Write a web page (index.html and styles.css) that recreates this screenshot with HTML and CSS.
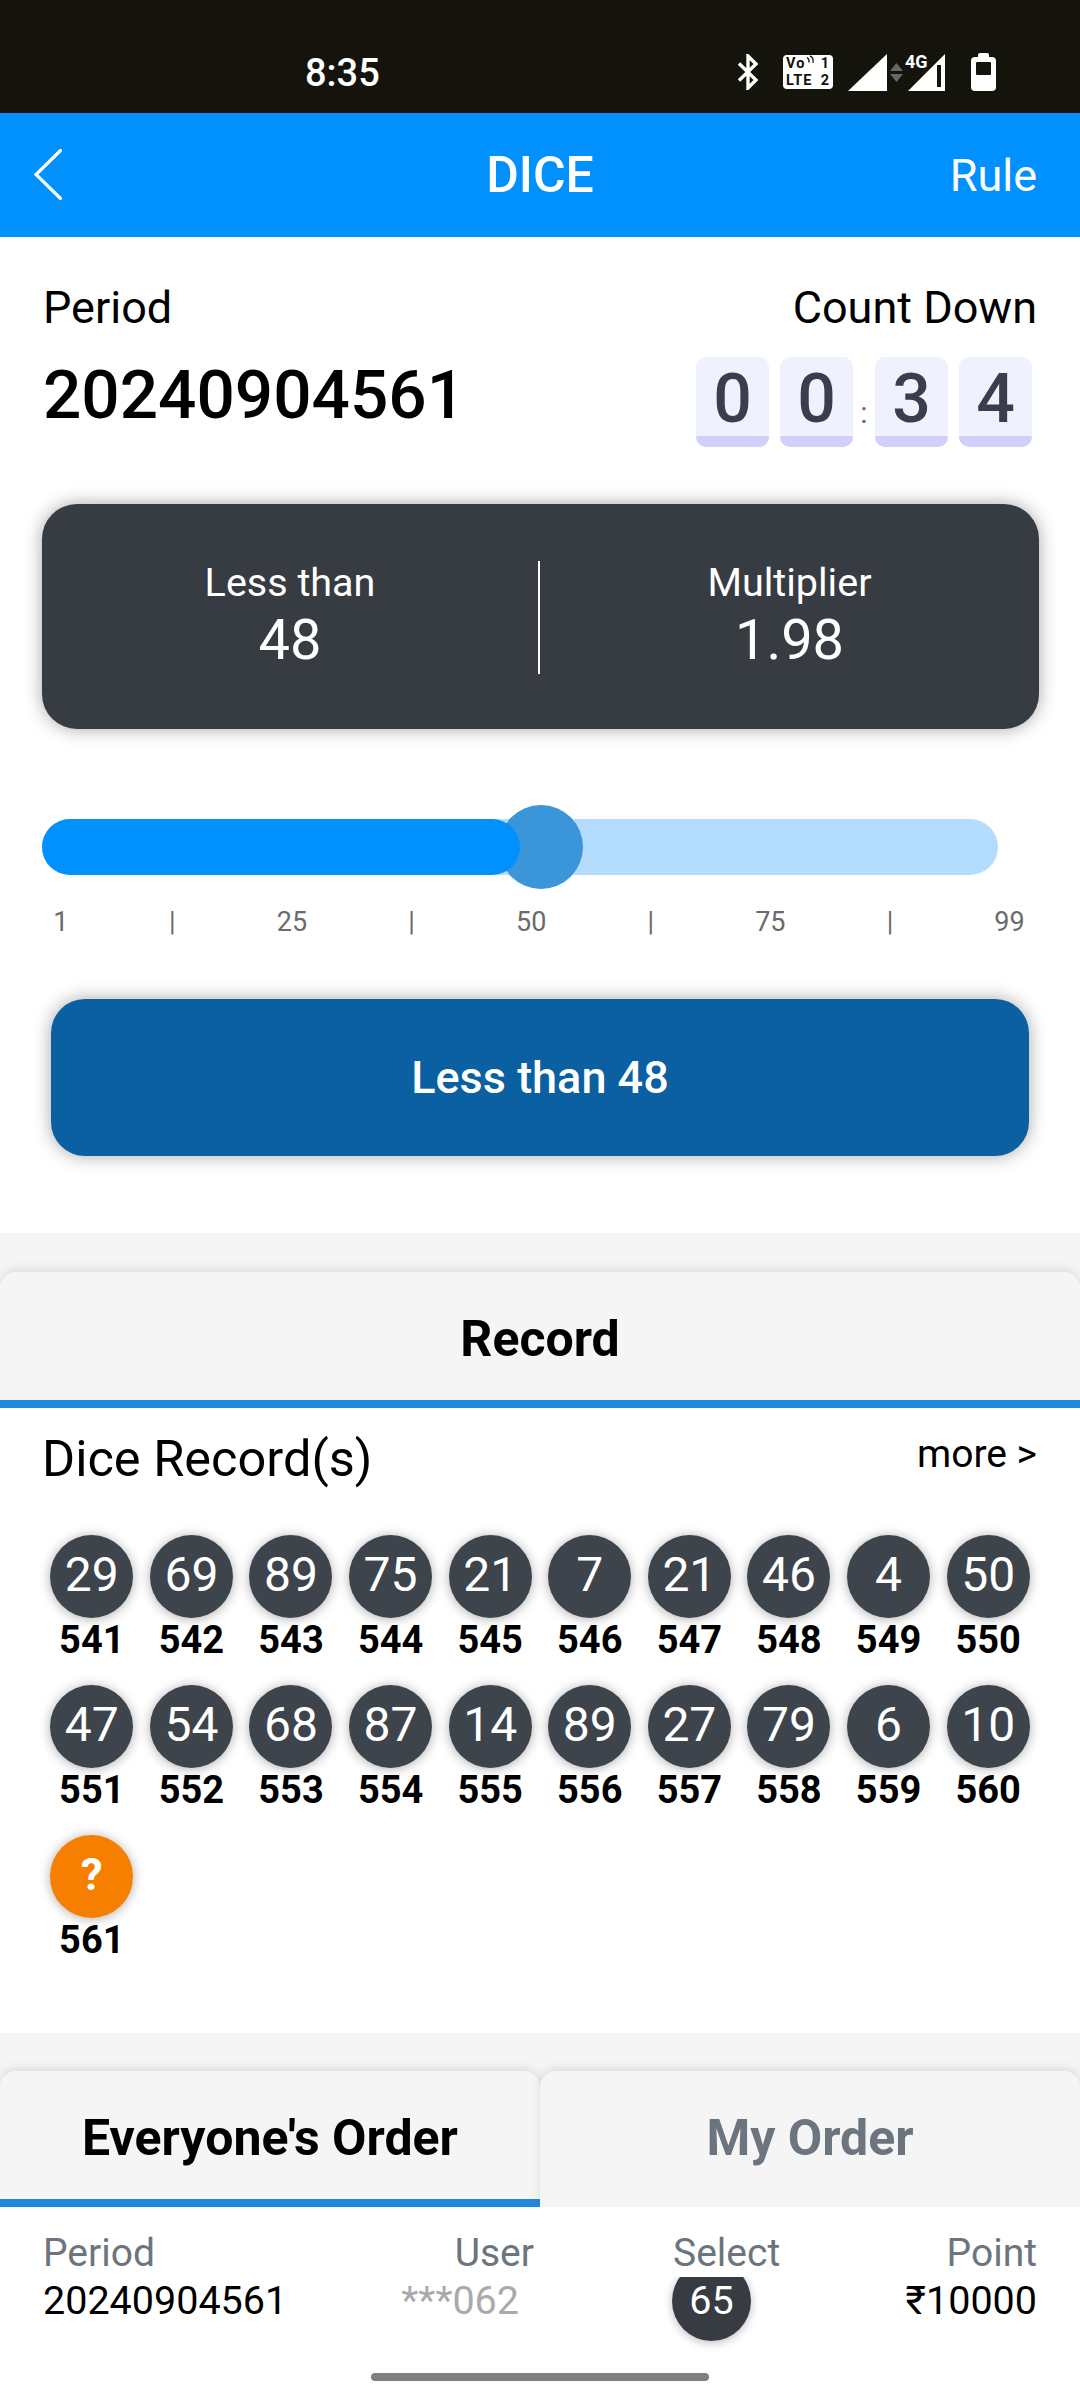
FILE: index.html
```html
<!DOCTYPE html>
<html lang="en">
<head>
    <meta charset="UTF-8">
    <meta name="viewport" content="width=device-width, initial-scale=1.0">
    <title>Dice</title>
    <link rel="stylesheet" href="styles.css">
</head>
<body>
    <div class="status-bar">
        <span class="status-time">8:35</span>
        <div class="status-icons">
            <svg class="ic-bluetooth" width="22" height="36" viewBox="0 0 22 36"><path d="M2 9.5 19 26 11 34V2l8 8L2 26.500" fill="none" stroke="#fff" stroke-width="3.4"/></svg>
            <div class="volte">
                <div class="volte-row"><span>Vo</span><svg class="volte-waves" width="9" height="9" viewBox="0 0 9 9"><path d="M1 2.500q2.500 1.500 2 5M4 .8q4 2 3 7" fill="none" stroke="#14130c" stroke-width="1.300"/></svg><span class="volte-num">1</span></div>
                <div class="volte-row"><span>LTE</span><span class="volte-num">2</span></div>
            </div>
            <div class="signal">
                <svg width="97" height="37" viewBox="0 0 97 37">
                    <path d="M0 37 39 0V37z" fill="#fff"/>
                    <path d="M48.500 9 55 17H42zM42 20H55L48.500 28z" fill="#666"/>
                    <path d="M60 37 97 0V37z" fill="#fff"/>
                    <path d="M89 11h4v22h-4z" fill="#14130c"/>
                </svg>
                <span class="signal-4g">4G</span>
            </div>
            <svg class="ic-battery" width="25" height="38" viewBox="0 0 25 38"><path d="M7 2q0-2 2-2h7q2 0 2 2v3H7z" fill="#fff"/><rect y="4" width="25" height="34" rx="4" fill="#fff"/><rect x="5" y="9" width="15" height="13" rx="1" fill="#14130c"/></svg>
        </div>
    </div>

    <div class="top-bar">
        <svg class="ic-back" width="28" height="51" viewBox="0 0 28 51"><path d="M26.500 1.500 2 25.500l24.500 24" fill="none" stroke="#fff" stroke-width="3.200" stroke-linecap="round"/></svg>
        <div class="top-title">DICE</div>
        <div class="top-rule">Rule</div>
    </div>

    <div class="game">
        <div class="period-row">
            <span class="period-label">Period</span>
            <span class="period-label">Count Down</span>
        </div>
        <div class="period-values">
            <div class="period-number">20240904561</div>
            <div class="countdown">
                <span class="digit">0</span>
                <span class="digit">0</span>
                <span class="digit-sep">:</span>
                <span class="digit">3</span>
                <span class="digit">4</span>
            </div>
        </div>

        <div class="info-card">
            <div class="info-col">
                <div class="info-label">Less than</div>
                <div class="info-value">48</div>
            </div>
            <div class="info-divider"></div>
            <div class="info-col">
                <div class="info-label">Multiplier</div>
                <div class="info-value">1.98</div>
            </div>
        </div>

        <div class="slider">
            <div class="slider-thumb"></div>
            <div class="slider-fill" style="width: 478px;"></div>
        </div>
        <div class="slider-scale">
            <span class="scale-first">1</span><span>|</span><span>25</span><span>|</span><span>50</span><span>|</span><span>75</span><span>|</span><span>99</span>
        </div>

        <div class="bet-button">Less than 48</div>
    </div>

    <div class="band">
        <div class="tab tab-active">Record</div>
    </div>

    <div class="record">
        <div class="record-head">
            <span class="record-title">Dice Record(s)</span>
            <span class="record-more">more &gt;</span>
        </div>
        <div class="ball-grid">
            <div class="ball-item"><div class="ball">29</div><div class="ball-no">541</div></div>
            <div class="ball-item"><div class="ball">69</div><div class="ball-no">542</div></div>
            <div class="ball-item"><div class="ball">89</div><div class="ball-no">543</div></div>
            <div class="ball-item"><div class="ball">75</div><div class="ball-no">544</div></div>
            <div class="ball-item"><div class="ball">21</div><div class="ball-no">545</div></div>
            <div class="ball-item"><div class="ball">7</div><div class="ball-no">546</div></div>
            <div class="ball-item"><div class="ball">21</div><div class="ball-no">547</div></div>
            <div class="ball-item"><div class="ball">46</div><div class="ball-no">548</div></div>
            <div class="ball-item"><div class="ball">4</div><div class="ball-no">549</div></div>
            <div class="ball-item"><div class="ball">50</div><div class="ball-no">550</div></div>
            <div class="ball-item"><div class="ball">47</div><div class="ball-no">551</div></div>
            <div class="ball-item"><div class="ball">54</div><div class="ball-no">552</div></div>
            <div class="ball-item"><div class="ball">68</div><div class="ball-no">553</div></div>
            <div class="ball-item"><div class="ball">87</div><div class="ball-no">554</div></div>
            <div class="ball-item"><div class="ball">14</div><div class="ball-no">555</div></div>
            <div class="ball-item"><div class="ball">89</div><div class="ball-no">556</div></div>
            <div class="ball-item"><div class="ball">27</div><div class="ball-no">557</div></div>
            <div class="ball-item"><div class="ball">79</div><div class="ball-no">558</div></div>
            <div class="ball-item"><div class="ball">6</div><div class="ball-no">559</div></div>
            <div class="ball-item"><div class="ball">10</div><div class="ball-no">560</div></div>
            <div class="ball-item"><div class="ball ball-pending">?</div><div class="ball-no">561</div></div>
        </div>
    </div>

    <div class="band band-orders">
        <div class="tab tab-active">Everyone's Order</div>
        <div class="tab tab-muted">My Order</div>
    </div>

    <div class="orders">
        <div class="orders-row orders-head">
            <span>Period</span>
            <span class="col-user">User</span>
            <span class="col-select">Select</span>
            <span class="col-point">Point</span>
        </div>
        <div class="orders-row orders-data">
            <span>20240904561</span>
            <span class="col-user col-masked">***062</span>
            <span class="col-select"><span class="order-ball">65</span></span>
            <span class="col-point">₹10000</span>
        </div>
        <div class="home-bar"></div>
    </div>
</body>
</html>
```

FILE: styles.css
```css
* {
    box-sizing: border-box;
}
html, body {
    margin: 0;
    padding: 0;
}
body {
    width: 1080px;
    height: 2400px;
    overflow: hidden;
    background: white;
    color: black;
    font-family: Roboto, "Noto Sans", sans-serif;
}

/* status bar */
.status-bar {
    height: 113px;
    background: #14130c;
    color: white;
    display: flex;
    justify-content: space-between;
    align-items: flex-start;
    padding: 53px 84px 0 305px;
}
.status-time {
    font-size: 38px;
    font-weight: 500;
    line-height: 40px;
}
.status-icons {
    display: flex;
    align-items: flex-start;
}
.ic-bluetooth {
    margin-top: 1px;
}
.volte {
    width: 50px;
    height: 34px;
    margin: 2px 0 0 24px;
    padding: 0 3px;
    background: white;
    border-radius: 4px;
    color: #14130c;
    font-size: 14.500px;
    font-weight: 700;
    line-height: 17px;
    letter-spacing: 1px;
}
.volte-row {
    display: flex;
    align-items: flex-start;
}
.volte-waves {
    margin-left: 1px;
}
.volte-num {
    margin-left: auto;
}
.signal {
    position: relative;
    width: 97px;
    height: 37px;
    margin: 1px 0 0 15px;
}
.signal svg {
    display: block;
}
.signal-4g {
    position: absolute;
    left: 57px;
    top: 0;
    font-size: 18px;
    font-weight: 700;
    line-height: 16px;
}
.ic-battery {
    margin-left: 26px;
}

/* header */
.top-bar {
    height: 124px;
    background: #0091ff;
    color: white;
    display: grid;
    grid-template-columns: 1fr auto 1fr;
    align-items: center;
    padding: 0 43px;
}
.ic-back {
    margin: -2px 0 0 -9px;
}
.top-title {
    font-size: 50px;
    font-weight: 500;
}
.top-rule {
    font-size: 45px;
    text-align: right;
}

/* game panel */
.game {
    padding-top: 46px;
    height: 996px;
}
.period-row {
    display: flex;
    justify-content: space-between;
    padding: 0 43px;
    font-size: 45px;
    line-height: 50px;
}
.period-values {
    display: flex;
    justify-content: space-between;
    margin-top: 24px;
    padding: 0 48px 0 43px;
}
.period-number {
    font-size: 67.500px;
    font-weight: 500;
    line-height: 76px;
}
.countdown {
    display: flex;
    gap: 11px;
    height: 90px;
}
.digit {
    width: 73px;
    background: #f0f1ff;
    border-bottom: 11px solid #d0d0fb;
    border-radius: 10px;
    color: #3a3d4d;
    font-size: 68px;
    font-weight: 500;
    line-height: 85px;
    text-align: center;
}
.digit-sep {
    width: 10px;
    margin: 0 -5px;
    color: #666;
    font-size: 30px;
    line-height: 112px;
    text-align: center;
}
.info-card {
    display: grid;
    grid-template-columns: 496px 2px 1fr;
    align-items: start;
    height: 225px;
    margin: 57px 41px 0 42px;
    padding-top: 57px;
    background: #373c42;
    border-radius: 35px;
    box-shadow: 0 0 18px rgba(0,0,0,0.35);
    color: white;
}
.info-col {
    text-align: center;
}
.info-label {
    font-size: 39.500px;
    line-height: 44px;
}
.info-value {
    font-size: 56px;
    line-height: 70px;
}
.info-divider {
    height: 113px;
    background: white;
}
.slider {
    position: relative;
    width: 956px;
    height: 56px;
    margin: 90px 0 0 42px;
    background: #b3dcff;
    border-radius: 28px;
}
.slider-fill {
    position: absolute;
    left: 0;
    top: 0;
    height: 56px;
    background: #0091ff;
    border-radius: 28px;
}
.slider-thumb {
    position: absolute;
    left: 457px;
    top: -14px;
    width: 84px;
    height: 84px;
    background: #3a96d9;
    border-radius: 50%;
}
.slider-scale {
    display: grid;
    grid-template-columns: repeat(9, 119.600px);
    margin: 30px 0 0 -7px;
    color: #6b6b6b;
    font-size: 27px;
    line-height: 34px;
    text-align: center;
}
.scale-first {
    padding-left: 16px;
}
.bet-button {
    height: 157px;
    margin: 60px 51px 0;
    background: #0a60a1;
    border-radius: 34px;
    box-shadow: 0 0 18px rgba(0,0,0,0.35);
    color: white;
    font-size: 45px;
    font-weight: 500;
    line-height: 157px;
    text-align: center;
}

/* tabs */
.band {
    display: flex;
    padding-top: 39px;
    background: #f5f5f5;
}
.band-orders {
    padding-top: 38px;
}
.tab {
    flex: 1;
    height: 136px;
    padding-top: 28px;
    background: #f5f5f5;
    border-radius: 16px 16px 0 0;
    box-shadow: 0 -3px 10px rgba(0,0,0,0.10);
    font-size: 50px;
    font-weight: 700;
    line-height: 78px;
    text-align: center;
}
.tab-active {
    border-bottom: 8px solid #2188e0;
}
.tab-muted {
    color: #6c757d;
}

/* record */
.record {
    position: relative;
    height: 625px;
    padding: 21px 43px 0 42px;
    background: white;
}
.record-head {
    display: flex;
    justify-content: space-between;
    align-items: flex-start;
    margin-bottom: 46px;
}
.record-title {
    font-size: 50.500px;
    line-height: 60px;
}
.record-more {
    font-size: 39px;
    line-height: 50px;
}
.ball-grid {
    display: grid;
    grid-template-columns: repeat(10, 99.600px);
    grid-auto-rows: 150px;
}
.ball-item {
    display: flex;
    flex-direction: column;
    align-items: center;
}
.ball {
    width: 83px;
    height: 83px;
    background: #3d444b;
    border-radius: 50%;
    box-shadow: 0 1px 12px rgba(0,0,0,0.32);
    color: white;
    font-size: 48px;
    line-height: 80px;
    text-align: center;
}
.ball-pending {
    background: #f77f00;
    font-size: 44px;
    font-weight: 700;
}
.ball-no {
    font-size: 38px;
    font-weight: 700;
    line-height: 44px;
}

/* orders */
.orders {
    position: relative;
    background: white;
}
.orders-row {
    display: grid;
    grid-template-columns: repeat(4, 1fr);
    padding: 0 43px;
    font-size: 39.500px;
}
.orders-head {
    height: 70px;
    padding-top: 24px;
    font-size: 39px;
    line-height: 44px;
    color: #6c757d;
}
.orders-data {
    height: 96px;
    overflow: hidden;
    line-height: 48px;
}
.col-user {
    padding-right: 6px;
    text-align: right;
}
.col-masked {
    padding-right: 21px;
    color: #aaa;
}
.col-select {
    padding-left: 133px;
}
.col-point {
    text-align: right;
}
.order-ball {
    display: block;
    width: 79px;
    height: 80px;
    margin: -16px 0 0 -1px;
    background: #373c42;
    border-radius: 50%;
    box-shadow: 0 2px 10px rgba(0,0,0,0.25);
    color: white;
    line-height: 80px;
    text-align: center;
}
.home-bar {
    width: 338px;
    height: 8px;
    margin: 0 auto;
    background: #808080;
    border-radius: 4px;
}
```
